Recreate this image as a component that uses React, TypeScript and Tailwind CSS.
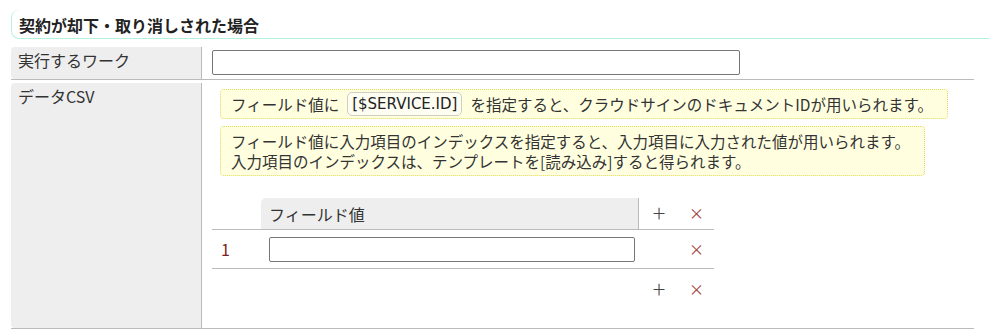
import React from 'react'

const font = { fontFamily: '"Noto Sans CJK JP", "Noto Sans", sans-serif' }
const latin = { fontFamily: '"DejaVu Sans", "Noto Sans CJK JP", sans-serif' }

function Plus() {
  return <span className="text-[15px] text-[#444]">＋</span>
}

function Cross() {
  return <span className="text-[15px] text-[#a0403a]">×</span>
}

export default function App() {
  return (
    <div className="bg-white pl-[11px] pt-[10px] text-[#333]" style={font}>
      {/* Section heading */}
      <div className="flex h-[29px] items-center rounded-l-[8px] border-b border-l border-[#b4f0de] pl-[7px] pt-[2px]">
        <h2 className="text-[16px] font-bold text-[#222]">契約が却下・取り消しされた場合</h2>
      </div>

      <div className="mt-[8px] w-[963px]">
        {/* Row: work */}
        <div className="flex border-b border-[#bbb]">
          <div className="w-[191px] shrink-0 rounded-tl-[4px] rounded-bl-[4px] border-r border-[#bbb] bg-[#eee] px-[7px] pt-[3px] text-[16px] leading-[20px]">
            実行するワーク
          </div>
          <div className="pb-[4px] pl-[10px] pt-[3px]">
            <input className="h-[25px] w-[528px] rounded-[2px] border border-[#767676] bg-white" />
          </div>
        </div>

        {/* Row: CSV */}
        <div className="mt-[3px] flex border-b border-[#bbb]">
          <div className="w-[191px] shrink-0 rounded-tl-[4px] rounded-bl-[4px] border-r border-[#bbb] bg-[#eee] px-[7px] pt-[3px] text-[16px] leading-[20px]">
            データCSV
          </div>
          <div className="flex-1 pl-[10px] pt-[6px] pb-[19px]">
            <div className="ml-[8px] flex flex-col items-start gap-[7px] text-[15.5px] leading-[20px]">
              <div className="flex items-center rounded-[4px] border border-dotted border-[#e2da5a] bg-[#ffffe0] py-[2px] pl-[10px] pr-[14px]">
                フィールド値に
                <span className="mx-[8px] rounded-[5px] border border-[#cfcfc4] bg-[#fdfdf2] px-[4px] text-[15px] leading-[22px] text-[#222]" style={latin}>
                  [$SERVICE.ID]
                </span>
                を指定すると、クラウドサインのドキュメントIDが用いられます。
              </div>
              <div className="rounded-[4px] border border-dotted border-[#e2da5a] bg-[#ffffe0] py-[4px] pl-[10px] pr-[14px] leading-[20px]">
                フィールド値に入力項目のインデックスを指定すると、入力項目に入力された値が用いられます。
                <br />
                入力項目のインデックスは、テンプレートを[読み込み]すると得られます。
              </div>
            </div>

            {/* Field table */}
            <div className="mt-[22px] w-[502px] text-[16px]">
              <div className="flex h-[32px] items-stretch border-b border-[#bbb]">
                <div className="w-[49px]" />
                <div className="flex w-[378px] items-center rounded-tl-[5px] border-r border-[#bbb] bg-[#eee] pl-[8px]">
                  フィールド値
                </div>
                <div className="flex w-[40px] items-center justify-center">
                  <Plus />
                </div>
                <div className="flex w-[35px] items-center justify-center">
                  <Cross />
                </div>
              </div>
              <div className="flex h-[39px] items-center border-b border-[#bbb]">
                <div className="w-[49px] pl-[9px] text-[#7a2222]">1</div>
                <div className="w-[378px] pl-[8px]">
                  <input className="h-[25px] w-[366px] rounded-[2px] border border-[#767676] bg-white" />
                </div>
                <div className="w-[40px]" />
                <div className="flex w-[35px] justify-center">
                  <Cross />
                </div>
              </div>
              <div className="flex h-[40px] items-center">
                <div className="w-[49px]" />
                <div className="w-[378px]" />
                <div className="flex w-[40px] justify-center">
                  <Plus />
                </div>
                <div className="flex w-[35px] justify-center">
                  <Cross />
                </div>
              </div>
            </div>
          </div>
        </div>
      </div>
    </div>
  )
}
